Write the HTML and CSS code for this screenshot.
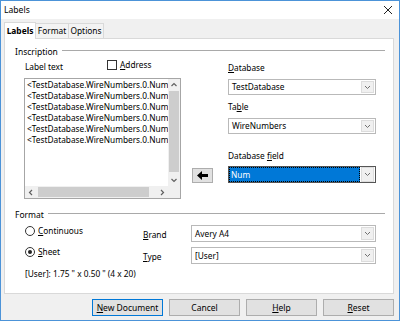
FILE: index.html
```html
<!DOCTYPE html>
<html>
<head>
<meta charset="utf-8">
<link rel="stylesheet" href="styles.css">
</head>
<body>
<div class="window">
  <div class="titlebar">
    <span class="title">Labels</span>
    <svg class="close" width="10" height="10" viewBox="0 0 10 10"><path d="M1 1 L9 9 M9 1 L1 9" stroke="#222" stroke-width="1" fill="none"/></svg>
  </div>
  <div class="body">
    <div class="tabs">
      <div class="tab active">Labels</div>
      <div class="tab">Format</div>
      <div class="tab">Options</div>
    </div>
    <div class="panel">
      <div class="frame-head"><span>Inscription</span><i class="rule"></i></div>
      <div class="inscription">
        <div class="left">
          <div class="lt-row">
            <span class="lt-label">Label text</span>
            <span class="check"><span class="box"></span><span><u>A</u>ddress</span></span>
          </div>
          <div class="listbox">
            <div class="list-text">
              <div>&lt;TestDatabase.WireNumbers.0.Number&gt;</div>
              <div>&lt;TestDatabase.WireNumbers.0.Number&gt;</div>
              <div>&lt;TestDatabase.WireNumbers.0.Number&gt;</div>
              <div>&lt;TestDatabase.WireNumbers.0.Number&gt;</div>
              <div>&lt;TestDatabase.WireNumbers.0.Number&gt;</div>
              <div>&lt;TestDatabase.WireNumbers.0.Number&gt;</div>
            </div>
            <div class="vscroll">
              <svg class="sarrow" width="12" height="12" viewBox="0 0 12 12"><path d="M3.5 7 L6 4.5 L8.5 7" stroke="#606060" stroke-width="1.2" fill="none"/></svg>
              <div class="vthumb"></div>
              <svg class="sarrow" width="12" height="12" viewBox="0 0 12 12"><path d="M3.5 5 L6 7.5 L8.5 5" stroke="#606060" stroke-width="1.2" fill="none"/></svg>
            </div>
            <div class="hscroll">
              <svg class="sarrow" width="12" height="11" viewBox="0 0 12 11"><path d="M7 3 L4.5 5.5 L7 8" stroke="#606060" stroke-width="1.2" fill="none"/></svg>
              <div class="hthumb"></div>
              <svg class="sarrow" width="12" height="11" viewBox="0 0 12 11"><path d="M5 3 L7.5 5.5 L5 8" stroke="#606060" stroke-width="1.2" fill="none"/></svg>
            </div>
            <div class="corner"></div>
          </div>
        </div>
        <div class="mid">
          <div class="arrow-btn">
            <svg width="11" height="9" viewBox="0 0 11 9"><path d="M0 4.5 L5 0 L5 3 L11 3 L11 6 L5 6 L5 9 Z" fill="#000"/></svg>
          </div>
        </div>
        <div class="right">
          <div class="lab lab-db"><u>D</u>atabase</div>
          <div class="combo c1"><span class="ctext">TestDatabase</span><span class="dd"><svg width="7" height="5" viewBox="0 0 7 5"><path d="M1 1 L3.5 3.5 L6 1" stroke="#707070" stroke-width="1" fill="none"/></svg></span></div>
          <div class="lab lab-tb">Ta<u>b</u>le</div>
          <div class="combo c2"><span class="ctext">WireNumbers</span><span class="dd"><svg width="7" height="5" viewBox="0 0 7 5"><path d="M1 1 L3.5 3.5 L6 1" stroke="#707070" stroke-width="1" fill="none"/></svg></span></div>
          <div class="lab lab-df">Database <u>f</u>ield</div>
          <div class="combo c3 selected"><span class="ctext sel">Num</span><span class="dd"><svg width="7" height="5" viewBox="0 0 7 5"><path d="M1 1 L3.5 3.5 L6 1" stroke="#707070" stroke-width="1" fill="none"/></svg></span></div>
        </div>
      </div>
      <div class="frame-head fmt-head"><span>Format</span><i class="rule"></i></div>
      <div class="format">
        <div class="radio r1"><span class="rb"></span><span><u>C</u>ontinuous</span></div>
        <div class="flab"><u>B</u>rand</div>
        <div class="combo fc"><span class="ctext">Avery A4</span><span class="dd"><svg width="7" height="5" viewBox="0 0 7 5"><path d="M1 1 L3.5 3.5 L6 1" stroke="#707070" stroke-width="1" fill="none"/></svg></span></div>
        <div class="radio r2"><span class="rb on"></span><span><u>S</u>heet</span></div>
        <div class="flab"><u>T</u>ype</div>
        <div class="combo fc"><span class="ctext">[User]</span><span class="dd"><svg width="7" height="5" viewBox="0 0 7 5"><path d="M1 1 L3.5 3.5 L6 1" stroke="#707070" stroke-width="1" fill="none"/></svg></span></div>
      </div>
      <div class="info">[User]: 1.75 " x 0.50 " (4 x 20)</div>
    </div>
    <div class="buttons">
      <div class="btn default"><u>N</u>ew Document</div>
      <div class="btn">Cancel</div>
      <div class="btn"><u>H</u>elp</div>
      <div class="btn"><u>R</u>eset</div>
    </div>
  </div>
</div>
</body>
</html>
```

FILE: styles.css
```css
* { box-sizing: border-box; }
html, body { margin: 0; padding: 0; }
body {
  width: 400px;
  height: 321px;
  overflow: hidden;
  font-family: "Noto Sans", "Open Sans", sans-serif;
  font-size: 8.3px;
  color: #000;
  background: #fff;
}
u { text-decoration: underline; text-underline-offset: 1px; }

.window {
  width: 400px;
  height: 321px;
  border: 1px solid #4c93d8;
  display: flex;
  flex-direction: column;
  background: #f0f0f0;
}
.titlebar {
  height: 18px;
  background: #fff;
  display: flex;
  align-items: center;
  justify-content: space-between;
  padding: 0 6px 0 3px;
  flex: none;
}
.title { font-size: 8.6px; line-height: 18px; }
.close { display: block; }

.body { flex: 1; display: flex; flex-direction: column; padding: 0 5px 0 3px; }

.tabs {
  display: flex;
  align-items: flex-start;
  height: 17px;
  margin-top: 3px;
  margin-bottom: -1px;
  position: relative;
  z-index: 1;
  flex: none;
}
.tab {
  height: 15px;
  margin-top: 1px;
  line-height: 14px;
  border: 1px solid #d9d9d9;
  border-bottom: none;
  background: #f3f3f3;
  text-align: center;
  margin-left: -1px;
  font-size: 8.4px;
}
.tab:nth-child(2) { width: 34px; }
.tab:nth-child(3) { width: 36px; }
.tab.active {
  height: 17px;
  margin-top: 0;
  width: 32px;
  background: #fff;
  font-weight: bold;
  margin-left: 0;
  line-height: 16px;
  z-index: 2;
}

.panel {
  height: 256px;
  border: 1px solid #d9d9d9;
  background: #fff;
  display: flex;
  flex-direction: column;
  flex: none;
}
.frame-head {
  display: flex;
  align-items: flex-start;
  height: 12px;
  margin-top: 7px;
  padding: 0 8px 0 10px;
  line-height: 12px;
  flex: none;
}
.frame-head span { font-size: 8.5px; }
.rule {
  flex: 1;
  height: 1px;
  background: #a9a9a9;
  margin-top: 4px;
  margin-left: 4px;
}
.fmt-head { margin-top: 11px; }

.inscription { display: flex; padding-left: 19px; height: 140px; flex: none; }
.left { width: 157px; padding-top: 3px; }
.lt-row { display: flex; align-items: flex-start; height: 12px; }
.lt-label { line-height: 12px; padding-left: 1px; width: 83px; }
.check { display: flex; align-items: center; margin-top: -2px; line-height: 12px; }
.box { width: 10px; height: 10px; border: 1px solid #333; background: #fff; margin-right: 3px; }

.listbox {
  margin-top: 5px;
  width: 157px;
  height: 121px;
  border: 1px solid #a6a6a6;
  display: grid;
  grid-template-columns: 1fr 12px;
  grid-template-rows: 1fr 12px;
  background: #fff;
}
.list-text {
  overflow: hidden;
  white-space: nowrap;
  line-height: 11px;
  padding-left: 2px;
  font-size: 8.3px;
}
.vscroll {
  background: #f0f0f0;
  display: flex;
  flex-direction: column;
  align-items: center;
}
.sarrow { display: block; flex: none; }
.vthumb { width: 10px; flex: 1; background: #cdcdcd; margin: 0 0 2px 0; }
.hscroll {
  background: #f0f0f0;
  display: flex;
  align-items: center;
}
.hthumb { height: 10px; width: 111px; background: #cdcdcd; margin-left: 1px; }
.hscroll .sarrow:last-child { margin-left: auto; }
.corner { background: #f0f0f0; }

.mid { width: 21px; margin-left: 11px; padding-top: 110px; }
.arrow-btn {
  width: 21px;
  height: 15px;
  background: #e1e1e1;
  border: 1px solid #adadad;
  display: flex;
  align-items: center;
  justify-content: center;
}
.arrow-btn svg { display: block; }

.right { width: 148px; margin-left: 15px; padding-top: 4px; }
.lab { height: 12px; line-height: 12px; }
.lab-tb { margin-top: 6px; }
.lab-df { margin-top: 16px; }
.combo {
  height: 16px;
  border: 1px solid #b9b9b9;
  background: #fff;
  display: flex;
  align-items: center;
  justify-content: space-between;
  padding: 1px;
}
.c1 { margin-top: 5px; }
.c2 { margin-top: 5px; }
.c3 { margin-top: 4px; height: 17px; }
.ctext { padding-left: 2px; line-height: 12px; white-space: nowrap; }
.dd {
  width: 13px;
  height: 100%;
  border: 1px solid #dcdcdc;
  background: #f0f0f0;
  display: flex;
  align-items: center;
  justify-content: center;
  flex: none;
}
.dd svg { display: block; }
.selected { padding: 0; border-color: #555; }
.selected .sel {
  flex: 1;
  height: 100%;
  background: #0078d7;
  color: #fff;
  border: 1px dotted #000;
  line-height: 13px;
  padding-left: 1px;
}
.selected .dd { height: 15px; margin: 0 1px; }

.format {
  display: grid;
  grid-template-columns: 118px 48px 185px;
  grid-template-rows: 17px 17px;
  row-gap: 5px;
  padding-left: 20px;
  margin-top: 4px;
  flex: none;
}
.radio { display: flex; align-items: center; height: 12px; line-height: 12px; }
.r2 { margin-top: -1px; }
.rb {
  width: 10px;
  height: 10px;
  border: 1px solid #333;
  border-radius: 50%;
  background: #fff;
  margin-right: 3px;
  position: relative;
  flex: none;
}
.rb.on::after {
  content: "";
  position: absolute;
  left: 2px; top: 2px;
  width: 4px; height: 4px;
  border-radius: 50%;
  background: #222;
}
.flab { line-height: 17px; padding-top: 1px; }
.fc { height: 17px; }

.info { margin-top: 4px; padding-left: 20px; line-height: 12px; }

.buttons {
  display: flex;
  justify-content: flex-end;
  gap: 6px;
  margin-top: 5px;
  flex: none;
}
.btn {
  width: 71px;
  height: 17px;
  background: #e1e1e1;
  border: 1px solid #adadad;
  text-align: center;
  line-height: 15px;
  font-size: 8.5px;
}
.btn.default { border-color: #0078d7; }
```
